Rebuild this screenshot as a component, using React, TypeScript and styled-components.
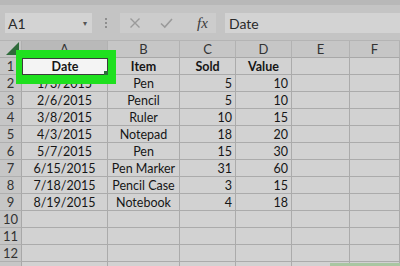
import styled, { createGlobalStyle } from 'styled-components';

const GlobalStyle = createGlobalStyle`
  html, body {
    margin: 0;
    padding: 0;
    background: #c4c4c4;
  }
  * {
    box-sizing: border-box;
  }
`;

const columns = ['A', 'B', 'C', 'D', 'E', 'F'];
const colWidths = [86, 72, 56, 56, 58, 50];

type Align = 'center' | 'right';
const aligns: Align[] = ['center', 'center', 'right', 'right', 'right', 'right'];

const rows: string[][] = [
  ['Date', 'Item', 'Sold', 'Value', '', ''],
  ['1/3/2015', 'Pen', '5', '10', '', ''],
  ['2/6/2015', 'Pencil', '5', '10', '', ''],
  ['3/8/2015', 'Ruler', '10', '15', '', ''],
  ['4/3/2015', 'Notepad', '18', '20', '', ''],
  ['5/7/2015', 'Pen', '15', '30', '', ''],
  ['6/15/2015', 'Pen Marker', '31', '60', '', ''],
  ['7/18/2015', 'Pencil Case', '3', '15', '', ''],
  ['8/19/2015', 'Notebook', '4', '18', '', ''],
  ['', '', '', '', '', ''],
  ['', '', '', '', '', ''],
  ['', '', '', '', '', ''],
  ['', '', '', '', '', ''],
];

export default function App() {
  return (
    <Screen>
      <GlobalStyle />
      <TopStrip />
      <FormulaBar>
        <NameBox>
          <span>A1</span>
          <Caret>▾</Caret>
        </NameBox>
        <Grip>
          <i />
          <i />
          <i />
        </Grip>
        <ButtonGroup>
          <svg width="12" height="12" viewBox="0 0 12 12">
            <path d="M1.5 1.5 L10.5 10.5 M10.5 1.5 L1.5 10.5" stroke="#9a9a9a" strokeWidth="1.4" />
          </svg>
          <svg width="13" height="12" viewBox="0 0 13 12">
            <path d="M1 6.5 L4.8 10 L12 2" stroke="#9a9a9a" strokeWidth="1.6" fill="none" />
          </svg>
          <Fx>fx</Fx>
        </ButtonGroup>
        <FormulaInput>Date</FormulaInput>
      </FormulaBar>
      <Sheet>
        <Corner>
          <svg width="13" height="13" viewBox="0 0 13 13">
            <path d="M13 0 L13 13 L0 13 Z" fill="#2f6b3b" />
          </svg>
        </Corner>
        {columns.map((c, i) => (
          <ColHeader key={c} $selected={i === 0}>
            {c}
          </ColHeader>
        ))}
        {rows.map((row, r) => (
          <RowGroup key={r}>
            <RowHeader>{r < 12 ? r + 1 : ''}</RowHeader>
            {row.map((v, c) =>
              r === 0 && c === 0 ? (
                <ActiveCell key={c}>
                  {v}
                  <Highlight>
                    <Handle />
                  </Highlight>
                </ActiveCell>
              ) : (
                <Cell key={c} $align={aligns[c]} $bold={r === 0}>
                  {v}
                </Cell>
              )
            )}
          </RowGroup>
        ))}
      </Sheet>
      <Watermark />
    </Screen>
  );
}

const Screen = styled.div`
  position: relative;
  width: 400px;
  height: 266px;
  overflow: hidden;
  background: #c4c4c4;
  font-family: Lato, 'Open Sans', sans-serif;
  color: #161616;
`;

const TopStrip = styled.div`
  height: 5px;
  background: #b8b8b8;
`;

const FormulaBar = styled.div`
  display: flex;
  align-items: center;
  height: 35px;
  padding: 8px 0 7px 5px;
`;

const NameBox = styled.div`
  display: flex;
  align-items: center;
  justify-content: space-between;
  width: 87px;
  height: 20px;
  padding: 0 5px 0 3px;
  background: #d3d3d3;
  font-size: 14px;
  color: #2a2a2a;
`;

const Caret = styled.span`
  font-size: 8px;
  color: #555;
`;

const Grip = styled.div`
  display: flex;
  flex-direction: column;
  gap: 2px;
  width: 28px;
  align-items: center;
  i {
    width: 2px;
    height: 2px;
    background: #8e8e8e;
  }
`;

const ButtonGroup = styled.div`
  display: flex;
  align-items: center;
  width: 96px;
  height: 20px;
  padding: 0 0 0 9px;
  gap: 19px;
  background: #cccccc;
`;

const Fx = styled.span`
  font-family: 'Liberation Serif', serif;
  font-style: italic;
  font-size: 15px;
  color: #3a3a3a;
  margin-left: 5px;
`;

const FormulaInput = styled.div`
  flex: 1;
  height: 20px;
  margin-left: 9px;
  padding-left: 4px;
  display: flex;
  align-items: center;
  background: #d3d3d3;
  font-size: 14px;
  color: #2a2a2a;
`;

const Sheet = styled.div`
  display: grid;
  grid-template-columns: 22px ${colWidths.map((w) => `${w}px`).join(' ')};
  grid-auto-rows: 17px;
  background: #d2d2d2;
  border-top: 1px solid #b4b4b4;
`;

const RowGroup = styled.div`
  display: contents;
`;

const Corner = styled.div`
  display: flex;
  align-items: flex-end;
  justify-content: flex-end;
  padding: 0 2px 2px 0;
  background: #c6c6c6;
  border-right: 1px solid #b0b0b0;
  border-bottom: 1px solid #a8a8a8;
`;

const ColHeader = styled.div<{ $selected: boolean }>`
  display: flex;
  align-items: center;
  justify-content: center;
  background: ${(p) => (p.$selected ? '#b9b9b9' : '#c6c6c6')};
  border-right: 1px solid #b2b2b2;
  border-bottom: 1px solid #a8a8a8;
  font-size: 13px;
  color: #333;
`;

const RowHeader = styled.div`
  display: flex;
  align-items: center;
  justify-content: center;
  background: #c6c6c6;
  border-right: 1px solid #a8a8a8;
  border-bottom: 1px solid #afafaf;
  font-size: 13px;
  color: #333;
`;

const Cell = styled.div<{ $align: Align; $bold: boolean }>`
  display: flex;
  align-items: center;
  justify-content: ${(p) => (p.$bold ? 'center' : p.$align === 'right' ? 'flex-end' : 'center')};
  padding: 0 3px;
  border-right: 1px solid #ababab;
  border-bottom: 1px solid #ababab;
  font-size: 12.5px;
  font-weight: ${(p) => (p.$bold ? 700 : 400)};
  white-space: nowrap;
`;

const ActiveCell = styled.div`
  position: relative;
  display: flex;
  align-items: center;
  justify-content: center;
  background: #f4f4f4;
  border: 1px solid #3c3c3c;
  font-size: 12.5px;
  font-weight: 700;
  z-index: 1;
`;

const Highlight = styled.div`
  position: absolute;
  left: -7px;
  top: -9px;
  right: -9px;
  bottom: -10px;
  border-style: solid;
  border-color: #1fe01f;
  border-width: 8px 8px 9px 6px;
  pointer-events: none;
`;

const Handle = styled.div`
  position: absolute;
  right: 0px;
  bottom: 0px;
  width: 4px;
  height: 4px;
  background: #2f6b3b;
`;

const Watermark = styled.div`
  position: absolute;
  right: 0;
  bottom: 0;
  width: 70px;
  height: 3px;
  background: #a9c6a2;
`;
